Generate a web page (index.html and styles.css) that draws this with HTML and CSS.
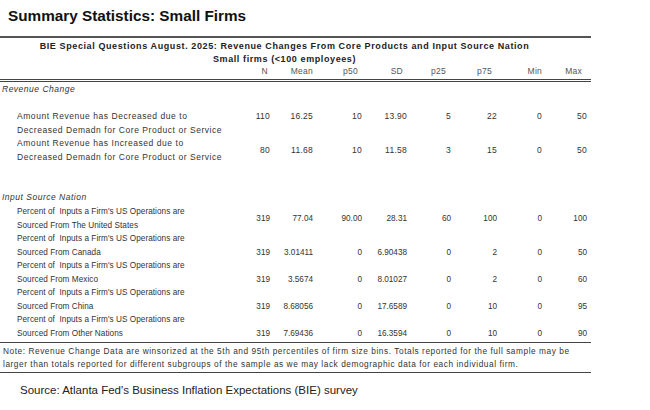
FILE: index.html
```html
<!DOCTYPE html>
<html>
<head>
<meta charset="utf-8">
<link rel="stylesheet" href="styles.css">
</head>
<body>
<h1 class="title">Summary Statistics: Small Firms</h1>
<div class="stats">
  <div class="caption">
    <div class="cap-line">BIE Special Questions August. 2025: Revenue Changes From Core Products and Input Source Nation</div>
    <div class="cap-line">Small firms (&lt;100 employees)</div>
  </div>
  <div class="row colhead">
    <div></div>
    <div class="h-n">N</div><div class="h-mean">Mean</div><div class="h-p50">p50</div><div class="h-sd">SD</div>
    <div class="h-p25">p25</div><div class="h-p75">p75</div><div class="h-min">Min</div><div class="h-max">Max</div>
  </div>
  <div class="section-title">Revenue Change</div>
  <div class="row data top r1">
    <div class="label">Amount Revenue has Decreased due to<br>Decreased Demadn for Core Product or Service</div>
    <div>110</div><div>16.25</div><div>10</div><div>13.90</div><div>5</div><div>22</div><div>0</div><div>50</div>
  </div>
  <div class="row data mid r2">
    <div class="label">Amount Revenue has Increased due to<br>Decreased Demadn for Core Product or Service</div>
    <div>80</div><div>11.68</div><div>10</div><div>11.58</div><div>3</div><div>15</div><div>0</div><div>50</div>
  </div>
  <div class="section-title second">Input Source Nation</div>
  <div class="row data mid src us">
    <div class="label">Percent of &nbsp;Inputs a Firm's US Operations are<br>Sourced From The United States</div>
    <div>319</div><div>77.04</div><div>90.00</div><div>28.31</div><div>60</div><div>100</div><div>0</div><div>100</div>
  </div>
  <div class="row data bot src">
    <div class="label">Percent of &nbsp;Inputs a Firm's US Operations are<br>Sourced From Canada</div>
    <div>319</div><div>3.01411</div><div>0</div><div>6.90438</div><div>0</div><div>2</div><div>0</div><div>50</div>
  </div>
  <div class="row data bot src">
    <div class="label">Percent of &nbsp;Inputs a Firm's US Operations are<br>Sourced From Mexico</div>
    <div>319</div><div>3.5674</div><div>0</div><div>8.01027</div><div>0</div><div>2</div><div>0</div><div>60</div>
  </div>
  <div class="row data bot src">
    <div class="label">Percent of &nbsp;Inputs a Firm's US Operations are<br>Sourced From China</div>
    <div>319</div><div>8.68056</div><div>0</div><div>17.6589</div><div>0</div><div>10</div><div>0</div><div>95</div>
  </div>
  <div class="row data bot src last">
    <div class="label">Percent of &nbsp;Inputs a Firm's US Operations are<br>Sourced From Other Nations</div>
    <div>319</div><div>7.69436</div><div>0</div><div>16.3594</div><div>0</div><div>10</div><div>0</div><div>90</div>
  </div>
  <div class="note">Note: Revenue Change Data are winsorized at the 5th and 95th percentiles of firm size bins. Totals reported for the full sample may be<br>larger than totals reported for different subgroups of the sample as we may lack demographic data for each individual firm.</div>
</div>
<p class="source">Source: Atlanta Fed's Business Inflation Expectations (BIE) survey</p>
</body>
</html>
```
FILE: styles.css
```css
html, body {
  margin: 0;
  padding: 0;
  background: #fff;
}
body {
  width: 650px;
  height: 410px;
  overflow: hidden;
  font-family: "Liberation Sans", Arial, sans-serif;
  color: #333;
}
.title {
  margin: 0;
  padding: 7px 0 0 8px;
  height: 36px;
  box-sizing: border-box;
  font-size: 15.3px;
  font-weight: bold;
  color: #111;
  line-height: 18px;
}
.stats {
  width: 591px;
  border-top: 2px solid #555;
  font-size: 8.5px;
  letter-spacing: 0.5px;
}
.caption {
  text-align: center;
  font-weight: bold;
  color: #222;
  padding: 1px 22px 0 0;
  font-size: 9px;
  letter-spacing: 0.6px;
}
.cap-line {
  line-height: 14px;
  height: 13px;
}
.row {
  display: grid;
  grid-template-columns: 240px 30px 43px 49px 45px 44px 46px 45px 45px;
  text-align: right;
  letter-spacing: 0.25px;
}
.row > div:first-child {
  text-align: left;
}
.colhead {
  line-height: 12px;
  padding-bottom: 2px;
  border-bottom: 3px double #444;
  color: #555;
}
.colhead .h-n { padding-right: 2px; }
.colhead .h-p50 { padding-right: 4px; }
.colhead .h-sd { padding-right: 4px; }
.colhead .h-p25 { padding-right: 5px; }
.colhead .h-p75 { padding-right: 5px; }
.colhead .h-max { padding-right: 5px; }
.section-title {
  font-style: italic;
  padding-left: 2px;
  line-height: 13px;
  margin-top: 1px;
}
.section-title.second {
  margin-top: 27px;
}
.data {
  line-height: 13.5px;
}
.data .label {
  padding-left: 17px;
  letter-spacing: 0.55px;
}
.r1 { margin-top: 14px; }
.top { align-items: start; }
.mid { align-items: center; }
.bot { align-items: end; }
.src {
  font-size: 8.2px;
  letter-spacing: 0;
}
.src .label {
  letter-spacing: 0.05px;
}
.us { margin-top: 1px; }
.last {
  padding-bottom: 2px;
  border-bottom: 1.5px solid #444;
}
.note {
  line-height: 13px;
  padding: 2px 0 1px 3px;
  border-bottom: 1.5px solid #444;
  font-size: 8.3px;
  letter-spacing: 0.55px;
}
.source {
  margin: 11px 0 0 20px;
  font-size: 11.5px;
  color: #222;
}
```
